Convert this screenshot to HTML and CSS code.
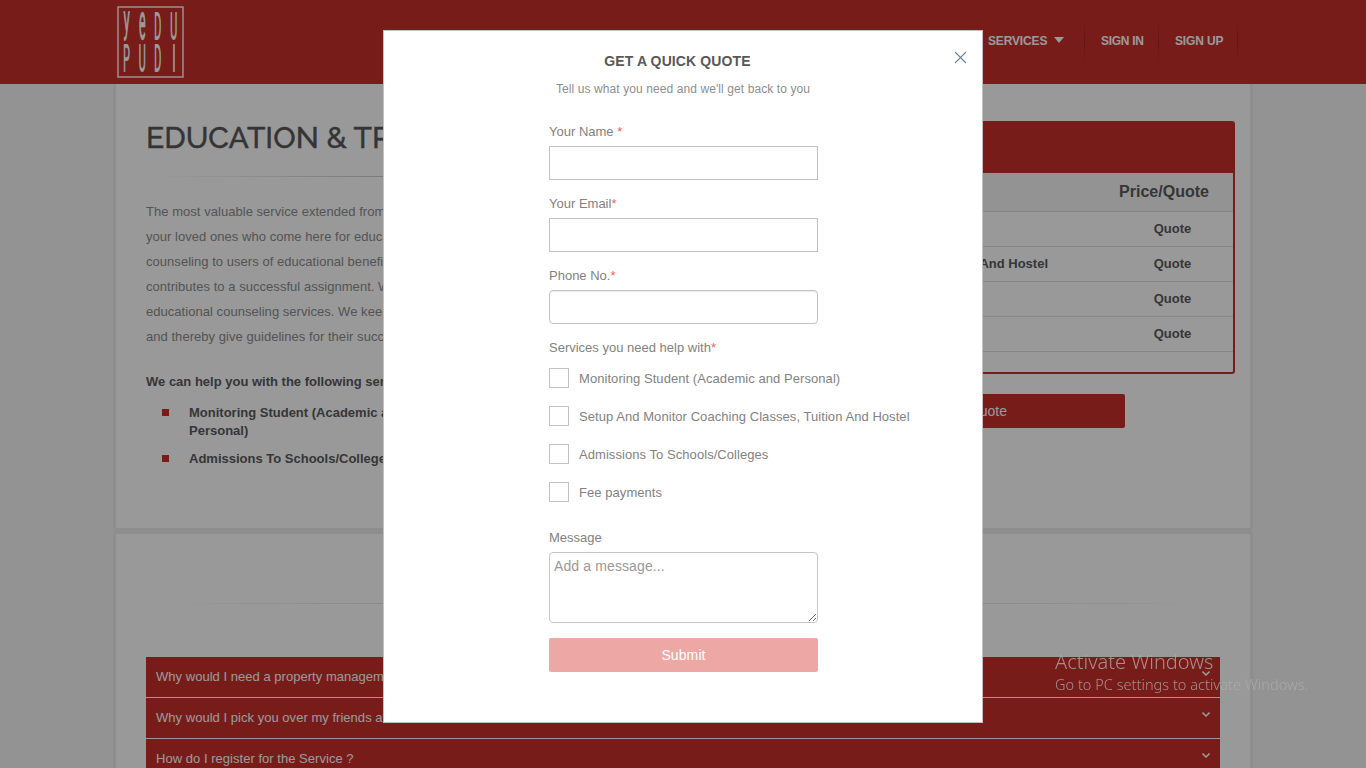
FILE: index.html
```html
<!DOCTYPE html>
<html lang="en">
<head>
<meta charset="utf-8">
<title>Yedupudi - Education</title>
<link rel="stylesheet" href="styles.css">
</head>
<body>
<header class="header">
  <svg class="logo" width="67" height="72" viewBox="0 0 67 72" role="img" aria-label="Yedupudi">
    <rect x="1" y="1" width="65" height="70" fill="none" stroke="#fff" stroke-width="1.4"/>
    <g class="logo-letters">
      <text transform="translate(6.8 26) scale(.76 2.35)">y</text>
      <text transform="translate(22.3 33) scale(.74 3)">e</text>
      <text transform="translate(37.3 33) scale(.66 2.3)">D</text>
      <text transform="translate(53.2 33) scale(.66 2.3)">U</text>
      <text transform="translate(6.3 65) scale(.66 2.3)">P</text>
      <text transform="translate(21.8 65) scale(.66 2.3)">U</text>
      <text transform="translate(37.3 65) scale(.66 2.3)">D</text>
      <text transform="translate(55.3 65) scale(.8 2.3)">I</text>
    </g>
  </svg>
  <nav class="nav">
    <a class="nav-item services">SERVICES <i class="caret"></i></a>
    <a class="nav-item signin">SIGN IN</a>
    <a class="nav-item signup">SIGN UP</a>
  </nav>
</header>

<main class="container">
  <section class="card intro">
    <div class="about">
      <h1>EDUCATION &amp; TRAINING</h1>
      <hr class="rule">
      <p class="copy">The most valuable service extended from<br>your loved ones who come here for education<br>counseling to users of educational benefits<br>contributes to a successful assignment. We<br>educational counseling services. We keep<br>and thereby give guidelines for their success</p>
      <p class="lead">We can help you with the following services</p>
      <ul class="bullets">
        <li>Monitoring Student (Academic and Personal)</li>
        <li>Admissions To Schools/Colleges</li>
      </ul>
    </div>
    <aside class="pricing">
      <div class="price-box">
        <div class="price-title"></div>
        <div class="price-row price-head"><span></span><span>Price/Quote</span></div>
        <div class="price-row"><span></span><span>Quote</span></div>
        <div class="price-row"><span>And Hostel</span><span>Quote</span></div>
        <div class="price-row"><span></span><span>Quote</span></div>
        <div class="price-row"><span></span><span>Quote</span></div>
      </div>
      <a class="quote-btn">Quote</a>
    </aside>
  </section>

  <section class="card faq">
    <hr class="rule faq-rule">
    <div class="question"><span>Why would I need a property management</span><svg class="chev" width="8" height="5" viewBox="0 0 8 5"><path d="M.5 .6 4 4 7.5 .6"/></svg></div>
    <div class="question"><span>Why would I pick you over my friends and</span><svg class="chev" width="8" height="5" viewBox="0 0 8 5"><path d="M.5 .6 4 4 7.5 .6"/></svg></div>
    <div class="question last"><span>How do I register for the Service ?</span><svg class="chev" width="8" height="5" viewBox="0 0 8 5"><path d="M.5 .6 4 4 7.5 .6"/></svg></div>
  </section>
</main>

<div class="overlay"></div>

<div class="modal" role="dialog">
  <svg class="close" width="13" height="13" viewBox="0 0 13 13"><path d="M1 1 12 12M12 1 1 12"/></svg>
  <h2>GET A QUICK QUOTE</h2>
  <p class="sub">Tell us what you need and we'll get back to you</p>
  <form class="form">
    <label class="label">Your Name <b>*</b></label>
    <input class="field" type="text">
    <label class="label">Your Email<b>*</b></label>
    <input class="field" type="text">
    <label class="label">Phone No.<b>*</b></label>
    <input class="field rounded" type="text">
    <label class="label">Services you need help with<b>*</b></label>
    <div class="checks">
      <label class="check"><i class="box"></i><span>Monitoring Student (Academic and Personal)</span></label>
      <label class="check"><i class="box"></i><span>Setup And Monitor Coaching Classes, Tuition And Hostel</span></label>
      <label class="check"><i class="box"></i><span>Admissions To Schools/Colleges</span></label>
      <label class="check"><i class="box"></i><span>Fee payments</span></label>
    </div>
    <label class="label">Message</label>
    <textarea class="message" placeholder="Add a message..."></textarea>
    <button class="submit" type="button">Submit</button>
  </form>
</div>

<div class="watermark">
  <div class="wm-title">Activate Windows</div>
  <div class="wm-text">Go to PC settings to activate Windows.</div>
</div>
</body>
</html>
```
FILE: styles.css
```css
* { box-sizing: border-box; }
body {
  margin: 0;
  height: 768px;
  overflow: hidden;
  background: #f5f5f5;
  color: #5a5a5c;
  font: 13px/18px "Liberation Sans", Arial, sans-serif;
}
h1, h2, p, ul { margin: 0; padding: 0; }

/* Header */
.header {
  position: relative;
  z-index: 1;
  display: flex;
  justify-content: space-between;
  height: 84px;
  padding: 6px 128px 0 117px;
  background: #c82f2b;
}
.logo-letters text {
  font: 300 16px Roboto, sans-serif;
  fill: #fff;
  stroke: #fff;
  stroke-width: .8px;
}
.nav {
  display: flex;
  height: 44px;
  margin-top: 13px;
  font-size: 12px;
  font-weight: bold;
  line-height: 44px;
  letter-spacing: -.15px;
  color: #fff;
}
.nav-item {
  padding-left: 16px;
  border-right: 1px solid;
  border-image: linear-gradient(transparent, #a82522 50%, transparent) 1;
}
.services { width: 113px; }
.signin { width: 74px; letter-spacing: -.3px; }
.signup { width: 79px; }
.caret {
  display: inline-block;
  margin-left: 4px;
  border: 5.5px solid transparent;
  border-top: 6px solid #fff;
  border-bottom: 0;
  vertical-align: 2px;
}

/* Cards */
.container {
  width: 1134px;
  margin-left: 116px;
}
.card {
  background: #fff;
  border-radius: 1px;
  box-shadow: 0 0 0 3px #ededed;
}
.intro {
  display: flex;
  justify-content: space-between;
  height: 444px;
  padding: 37px 15px 0 30px;
}
.about { width: 590px; }
h1 {
  font: 500 30px/34px Raleway, "Lato", sans-serif;
  letter-spacing: .03px;
  -webkit-text-stroke: .4px #58585a;
  color: #58585a;
}
.rule {
  width: 100%;
  height: 1px;
  margin: 21px 0 22px;
  border: 0;
  background: linear-gradient(90deg, transparent 2%, #c0c0c0 50%, transparent 98%);
}
.copy {
  line-height: 25px;
  letter-spacing: .04px;
  color: #8c8c8c;
}
.lead {
  margin-top: 24px;
  font-weight: bold;
}
.bullets {
  width: 265px;
  margin-top: 13px;
  padding-left: 16px;
  list-style: none;
  font-weight: bold;
}
.bullets li {
  display: flex;
  gap: 20px;
  margin-bottom: 10px;
}
.bullets li::before {
  content: "";
  flex: none;
  width: 7px;
  height: 7px;
  margin-top: 5px;
  background: #c82f2b;
}

/* Pricing */
.pricing { width: 430px; }
.price-box {
  height: 253px;
  border: 2px solid #c82f2b;
  border-radius: 3px;
}
.price-title {
  height: 50px;
  background: #c82f2b;
}
.price-row {
  display: flex;
  justify-content: space-between;
  height: 35px;
  border-bottom: 1px solid #e0e0e0;
  font-weight: bold;
  line-height: 34px;
}
.price-row span:first-child {
  width: 241px;
  text-align: right;
}
.price-row span:last-child {
  width: 121px;
  text-align: center;
}
.price-row.price-head {
  height: 39px;
  background: #f5f5f5;
  font-size: 16px;
  line-height: 38px;
}
.price-row.price-head span:last-child { width: 138px; }
.quote-btn {
  display: block;
  width: 220px;
  height: 34px;
  margin: 20px 110px 0 auto;
  padding-right: 118px;
  border-radius: 2px;
  background: #c82f2b;
  color: #fff;
  font-size: 14px;
  line-height: 34px;
  text-align: right;
}

/* FAQ */
.faq {
  height: 234px;
  margin-top: 6px;
  padding: 69px 30px 0;
}
.faq-rule { margin: 0 0 53px; }
.question {
  display: flex;
  justify-content: space-between;
  align-items: flex-start;
  height: 41px;
  padding: 0 10px;
  border-bottom: 1px solid #fff;
  background: #c82f2b;
  color: #fff;
  line-height: 39px;
  letter-spacing: .03px;
}
.question.last {
  height: 29px;
  border-bottom: 0;
}
.question.last span { height: 29px; }
.chev {
  margin-top: 14px;
  fill: none;
  stroke: #fff;
  stroke-width: 1.5;
}

/* Modal */
.overlay {
  position: fixed;
  z-index: 2;
  inset: 0;
  background: rgba(0, 0, 0, .4);
}
.modal {
  position: fixed;
  z-index: 3;
  top: 30px;
  left: 383px;
  width: 600px;
  height: 693px;
  padding: 21px 0 0 165px;
  border: 1px solid #c1c1c1;
  background: #fff;
  color: #828282;
}
.close {
  position: absolute;
  top: 20px;
  right: 15px;
  fill: none;
  stroke: #6d8496;
  stroke-width: 1.1;
}
h2 {
  width: 257px;
  font-size: 14px;
  line-height: 18px;
  letter-spacing: .12px;
  text-align: center;
  color: #58585a;
}
.sub {
  width: 268px;
  margin-top: 10px;
  font-size: 12px;
  letter-spacing: .09px;
  text-align: center;
  color: #8e8e8e;
}
.form { margin-top: 25px; }
.label {
  display: block;
  height: 23px;
}
.label b {
  font-weight: normal;
  color: #f2654f;
}
.field {
  display: block;
  width: 269px;
  height: 34px;
  margin: 0 0 15px;
  border: 1px solid #c3c3c7;
  background: #fff;
}
.rounded {
  border-radius: 4px;
  box-shadow: inset 0 1px 1px rgba(0, 0, 0, .075);
}
.checks {
  display: grid;
  gap: 18px;
  margin: 6px 0 27px;
}
.check {
  display: flex;
  align-items: center;
  gap: 10px;
  height: 20px;
  letter-spacing: .06px;
  white-space: nowrap;
}
.check span { padding-top: 1px; }
.box {
  width: 20px;
  height: 20px;
  border: 1px solid #c3c3c7;
}
.message {
  display: block;
  width: 269px;
  height: 71px;
  margin: 0 0 15px;
  padding: 4px;
  border: 1px solid #c6c6c6;
  border-radius: 4px;
  font: 14px/18px "Liberation Sans", Arial, sans-serif;
  letter-spacing: .12px;
  resize: vertical;
}
.message::placeholder { color: #999; }
.submit {
  display: block;
  width: 269px;
  height: 34px;
  padding: 0;
  border: 0;
  border-radius: 2px;
  background: #eda7a5;
  color: #fff;
  font: 14px/34px "Liberation Sans", Arial, sans-serif;
  letter-spacing: .1px;
}

/* Desktop watermark */
.watermark {
  position: fixed;
  z-index: 4;
  top: 649px;
  left: 1055px;
  font-family: "Segoe UI", "Noto Sans", "Open Sans", sans-serif;
  font-weight: 300;
  color: rgba(172, 172, 172, .8);
  white-space: nowrap;
}
.wm-title {
  font-size: 20px;
  line-height: 26px;
}
.wm-text {
  font-size: 14.5px;
  line-height: 19px;
  letter-spacing: .03px;
}
```
